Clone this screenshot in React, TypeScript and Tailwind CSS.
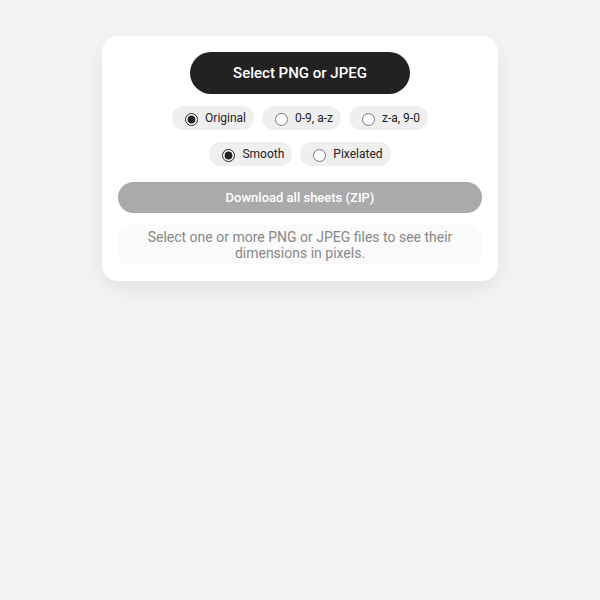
import { useState } from "react";

type Option = { value: string; label: string };

const orders: Option[] = [
  { value: "original", label: "Original" },
  { value: "asc", label: "0-9, a-z" },
  { value: "desc", label: "z-a, 9-0" },
];

const scalings: Option[] = [
  { value: "smooth", label: "Smooth" },
  { value: "pixelated", label: "Pixelated" },
];

function RadioPills({
  name,
  options,
  value,
  onChange,
}: {
  name: string;
  options: Option[];
  value: string;
  onChange: (value: string) => void;
}) {
  return (
    <div role="radiogroup" aria-label={name} className="flex flex-wrap justify-center gap-2">
      {options.map((option) => (
        <label
          key={option.value}
          className="flex h-6 cursor-pointer items-center gap-1 rounded-full bg-[#efefef] px-2 text-xs text-[#222222]"
        >
          <input
            type="radio"
            name={name}
            value={option.value}
            checked={value === option.value}
            onChange={() => onChange(option.value)}
            className="mt-[3px] mr-[3px] ml-[5px] size-[13px] accent-[#222222]"
          />
          {option.label}
        </label>
      ))}
    </div>
  );
}

export default function App() {
  const [order, setOrder] = useState("original");
  const [scaling, setScaling] = useState("smooth");

  return (
    <div className="min-h-screen bg-[#f4f4f4] px-4 py-9 font-['Roboto',sans-serif]">
      <main className="mx-auto flex w-full max-w-[396px] flex-col gap-3 rounded-2xl bg-white p-4 shadow-[0_8px_24px_rgba(0,0,0,0.08)]">
        <button
          type="button"
          className="h-[42px] w-full max-w-[220px] cursor-pointer self-center rounded-full bg-[#222222] text-[15px] font-medium text-white"
        >
          Select PNG or JPEG
        </button>
        <RadioPills name="order" options={orders} value={order} onChange={setOrder} />
        <RadioPills name="scaling" options={scalings} value={scaling} onChange={setScaling} />
        <button
          type="button"
          disabled
          className="mt-1 h-[31px] w-full rounded-full bg-[#aaaaaa] text-[13px] font-medium text-white"
        >
          Download all sheets (ZIP)
        </button>
        <p className="rounded-xl bg-[#fafafa] px-3 py-1 text-center text-sm leading-4 text-[#888888]">
          Select one or more PNG or JPEG files to see their dimensions in pixels.
        </p>
      </main>
    </div>
  );
}
